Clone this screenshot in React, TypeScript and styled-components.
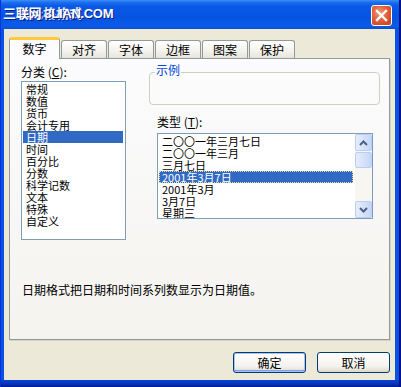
import styled, { createGlobalStyle } from "styled-components";

const GlobalStyle = createGlobalStyle`
  html, body {
    margin: 0;
    padding: 0;
    background: #fff;
  }
  body {
    font-family: "Noto Sans CJK SC", "Noto Sans", sans-serif;
    font-size: 12px;
    color: #000;
  }
`;

const Window = styled.div`
  width: 401px;
  height: 387px;
  display: flex;
  flex-direction: column;
  background: #0a52e4;
  border-right: 2px solid #00138c;
  border-left: 1px solid #0831d9;
  box-sizing: border-box;
  overflow: hidden;
`;

const TitleBar = styled.div`
  height: 29px;
  flex: none;
  display: flex;
  align-items: flex-start;
  justify-content: space-between;
  padding: 0 7px 0 2px;
  background: linear-gradient(
    to bottom,
    #3d8ff5 0%,
    #1e6ff0 8%,
    #0a5ae6 20%,
    #0653e2 60%,
    #0a5be8 90%,
    #0a4fd6 100%
  );
`;

const Title = styled.div`
  position: relative;
  margin-top: 6px;
  font-size: 13px;
  font-weight: bold;
  line-height: 16px;
  color: #fff;
  white-space: nowrap;
  text-shadow: 1px 1px 0 #0a1e8a;
  font-family: "Liberation Sans", "Noto Sans CJK SC", sans-serif;
`;

const TitleMark = styled.span`
  position: absolute;
  left: 0;
  top: 0;
  letter-spacing: -0.3px;
`;

const TitleName = styled.span`
  padding-left: 14px;
  opacity: 0.85;
`;

const CloseButton = styled.div`
  width: 21px;
  height: 21px;
  margin-top: 5px;
  box-sizing: border-box;
  border: 1px solid #fff;
  border-radius: 3px;
  background: radial-gradient(circle at 40% 35%, #f09a7c 0%, #e2603c 45%, #c63d1c 100%);
  display: flex;
  align-items: center;
  justify-content: center;
`;

const Client = styled.div`
  flex: 1;
  margin: 0 4px 0 3px;
  background: #ece9d8;
  display: flex;
  flex-direction: column;
  padding: 8px 5px 0 5px;
`;

const BottomEdge = styled.div`
  height: 7px;
  flex: none;
  background: linear-gradient(to bottom, #0846d0, #0831b8 60%, #001b8e);
`;

const TabStrip = styled.div`
  display: flex;
  align-items: flex-end;
  height: 21px;
  position: relative;
  z-index: 1;
`;

const Tab = styled.div<{ $active?: boolean }>`
  box-sizing: border-box;
  width: ${(p) => (p.$active ? 51 : 46)}px;
  height: ${(p) => (p.$active ? 22 : 18)}px;
  margin-left: ${(p) => (p.$active ? 0 : 1)}px;
  margin-bottom: ${(p) => (p.$active ? -1 : 0)}px;
  border: 1px solid #919b9c;
  border-bottom: none;
  border-top: ${(p) => (p.$active ? "3px solid #ffc83c" : "1px solid #919b9c")};
  border-radius: 3px 3px 0 0;
  background: ${(p) =>
    p.$active ? "#fcfcfe" : "linear-gradient(to bottom, #ffffff, #f3f2ec 60%, #e6e4da)"};
  text-align: center;
  line-height: 17px;
  font-size: 12px;
`;

const Panel = styled.div`
  height: 282px;
  box-sizing: border-box;
  border: 1px solid #919b9c;
  box-shadow: 1px 1px 0 #d6d3c4;
  background: linear-gradient(to bottom, #fcfcfe, #f4f3ee);
  padding: 5px 9px 0 11px;
  display: flex;
  flex-direction: column;
`;

const TopRow = styled.div`
  display: flex;
  align-items: flex-start;
`;

const LeftColumn = styled.div`
  width: 105px;
  display: flex;
  flex-direction: column;
`;

const RightColumn = styled.div`
  width: 231px;
  margin-left: 23px;
  display: flex;
  flex-direction: column;
`;

const FieldLabel = styled.div<{ $indent?: number; $top?: number }>`
  height: 16px;
  line-height: 16px;
  margin-left: ${(p) => p.$indent ?? 0}px;
  margin-top: ${(p) => p.$top ?? 0}px;
  white-space: nowrap;
`;

const ListBox = styled.div<{ $width: number; $height: number; $indent?: number; $top?: number }>`
  width: ${(p) => p.$width}px;
  height: ${(p) => p.$height}px;
  margin-left: ${(p) => p.$indent ?? 0}px;
  margin-top: ${(p) => p.$top ?? 0}px;
  box-sizing: border-box;
  border: 1px solid #7f9db9;
  background: #fff;
  display: flex;
  overflow: hidden;
`;

const Items = styled.div`
  flex: 1;
  padding: 1px 2px 1px 1px;
  min-width: 0;
`;

const Item = styled.div<{ $selected?: boolean; $focus?: boolean }>`
  height: 12px;
  line-height: 12px;
  font-size: 11px;
  padding-left: 3px;
  white-space: nowrap;
  background: ${(p) => (p.$selected ? "#316ac5" : "transparent")};
  color: ${(p) => (p.$selected ? "#fff" : "#000")};
  outline: ${(p) => (p.$focus ? "1px dotted #e8d890" : "none")};
  outline-offset: -1px;
`;

const Group = styled.fieldset`
  margin: 0;
  padding: 0;
  border: 1px solid #d0d0bf;
  border-radius: 4px;
  min-width: 0;
`;

const GroupLegend = styled.legend`
  margin-left: 5px;
  padding: 0 1px 4px 1px;
  line-height: 12px;
  color: #0046d5;
`;

const Sample = styled.div`
  height: 24px;
`;

const ScrollBar = styled.div`
  width: 17px;
  flex: none;
  display: flex;
  flex-direction: column;
  background: #f7f6f1;
`;

const ScrollButton = styled.div<{ $thumb?: boolean }>`
  height: ${(p) => (p.$thumb ? 16 : 17)}px;
  margin-top: ${(p) => (p.$thumb ? 1 : 0)}px;
  box-sizing: border-box;
  border: 1px solid #bacdf6;
  border-radius: 2px;
  background: linear-gradient(to right, #e6eefc, #c6d6f8);
  display: flex;
  align-items: center;
  justify-content: center;
`;

const ScrollTrack = styled.div`
  flex: 1;
`;

const Description = styled.div`
  margin-top: 43px;
  padding-left: 1px;
  line-height: 14px;
`;

const ButtonRow = styled.div`
  display: flex;
  justify-content: flex-end;
  gap: 11px;
  margin-top: 12px;
`;

const Button = styled.div<{ $default?: boolean }>`
  width: 73px;
  height: 21px;
  box-sizing: border-box;
  border: 1px solid #003c74;
  border-radius: 3px;
  background: linear-gradient(to bottom, #ffffff, #f3f2ee 70%, #dcd8cc);
  box-shadow: ${(p) => (p.$default ? "inset 0 0 0 1px #a9c2f2, inset 0 -1px 0 1px #7da2ea" : "none")};
  text-align: center;
  line-height: 19px;
`;

const Chevron = ({ up }: { up?: boolean }) => (
  <svg width="9" height="6" viewBox="0 0 9 6">
    <path
      d={up ? "M1 5 L4.5 1.5 L8 5" : "M1 1 L4.5 4.5 L8 1"}
      fill="none"
      stroke="#4d6185"
      strokeWidth="2"
    />
  </svg>
);

const categories = [
  "常规",
  "数值",
  "货币",
  "会计专用",
  "日期",
  "时间",
  "百分比",
  "分数",
  "科学记数",
  "文本",
  "特殊",
  "自定义",
];

const types = [
  "二〇〇一年三月七日",
  "二〇〇一年三月",
  "三月七日",
  "2001年3月7日",
  "2001年3月",
  "3月7日",
  "星期三",
];

const tabs = ["数字", "对齐", "字体", "边框", "图案", "保护"];

export default function App() {
  return (
    <>
      <GlobalStyle />
      <Window>
        <TitleBar>
          <Title>
            <TitleName>单元格格式</TitleName>
            <TitleMark>三联网 3LIAN.COM</TitleMark>
          </Title>
          <CloseButton>
            <svg width="13" height="13" viewBox="0 0 13 13">
              <path d="M2 2 L11 11 M11 2 L2 11" stroke="#fff" strokeWidth="2.4" strokeLinecap="square" />
            </svg>
          </CloseButton>
        </TitleBar>
        <Client>
          <TabStrip>
            {tabs.map((t, i) => (
              <Tab key={t} $active={i === 0}>
                {t}
              </Tab>
            ))}
          </TabStrip>
          <Panel>
            <TopRow>
              <LeftColumn>
                <FieldLabel>
                  分类 (<u>C</u>):
                </FieldLabel>
                <ListBox $width={105} $height={159} $top={1}>
                  <Items>
                    {categories.map((c) => (
                      <Item key={c} $selected={c === "日期"}>
                        {c}
                      </Item>
                    ))}
                  </Items>
                </ListBox>
              </LeftColumn>
              <RightColumn>
                <Group>
                  <GroupLegend>示例</GroupLegend>
                  <Sample />
                </Group>
                <FieldLabel $indent={8} $top={9}>
                  类型 (<u>T</u>):
                </FieldLabel>
                <ListBox $width={216} $height={86} $indent={8} $top={3}>
                  <Items>
                    {types.map((t, i) => (
                      <Item key={t} $selected={i === 3} $focus={i === 3}>
                        {t}
                      </Item>
                    ))}
                  </Items>
                  <ScrollBar>
                    <ScrollButton>
                      <Chevron up />
                    </ScrollButton>
                    <ScrollButton $thumb />
                    <ScrollTrack />
                    <ScrollButton>
                      <Chevron />
                    </ScrollButton>
                  </ScrollBar>
                </ListBox>
              </RightColumn>
            </TopRow>
            <Description>日期格式把日期和时间系列数显示为日期值。</Description>
          </Panel>
          <ButtonRow>
            <Button $default>确定</Button>
            <Button>取消</Button>
          </ButtonRow>
        </Client>
        <BottomEdge />
      </Window>
    </>
  );
}
